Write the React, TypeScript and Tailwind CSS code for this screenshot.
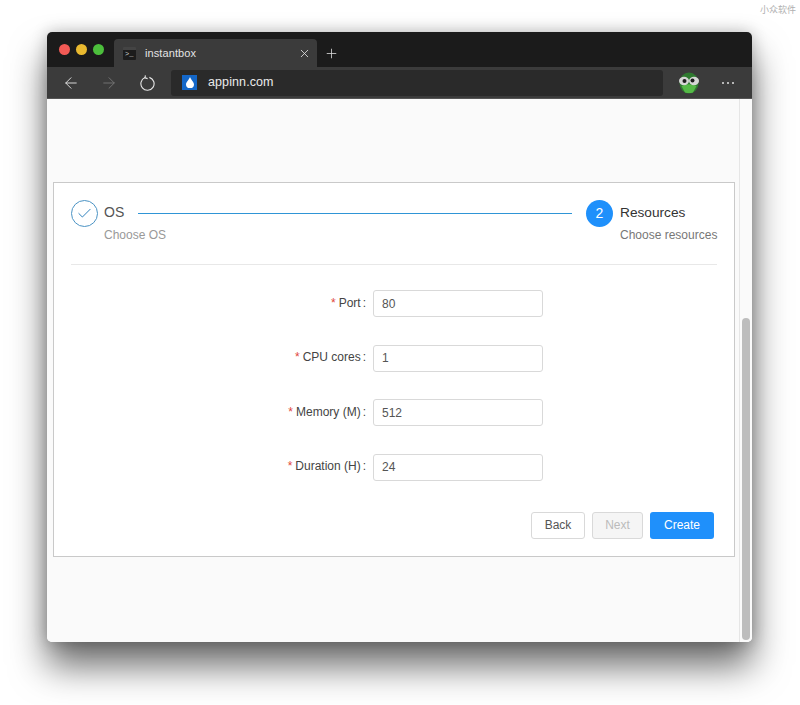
import React from 'react'
import { ArrowLeft, ArrowRight, Plus, X, Check } from 'lucide-react'

const fields = [
  { label: 'Port', value: '80' },
  { label: 'CPU cores', value: '1' },
  { label: 'Memory (M)', value: '512' },
  { label: 'Duration (H)', value: '24' },
]

function Frog() {
  return (
    <svg width="22" height="22" viewBox="0 0 22 22">
      <ellipse cx="11" cy="11" rx="9.5" ry="10.5" fill="#2f7a30" />
      <path d="M3.5 14 Q11 10.5 18.5 14 L15 20.5 Q11 21.5 7 20.5Z" fill="#55b947" />
      <ellipse cx="6" cy="9" rx="5" ry="4.2" fill="#d6d6d6" />
      <ellipse cx="16" cy="9" rx="5" ry="4.2" fill="#d6d6d6" />
      <circle cx="6.5" cy="9" r="2" fill="#1d1d1d" />
      <circle cx="14.5" cy="8.5" r="2" fill="#1d1d1d" />
    </svg>
  )
}

function Reload() {
  return (
    <svg width="16" height="16" viewBox="0 0 16 16" fill="none" stroke="#e8e8e8" strokeWidth="1.1">
      <path d="M6 2.6 A6.6 6.6 0 1 0 10.4 2.4" />
      <path d="M6.4 0.4 L6 2.8 L8.6 3.6" />
    </svg>
  )
}

function App() {
  return (
    <div className="relative w-[800px] h-[705px] bg-white pt-[32px] pl-[47px] overflow-hidden font-['Liberation_Sans',sans-serif]">
      {/* watermark */}
      <div className="absolute top-[3px] right-[4px] text-[9px] text-[#b0b0b0] font-['Noto_Sans_CJK_SC',sans-serif]">小众软件</div>

      {/* window */}
      <div className="w-[705px] h-[610px] rounded-[5px] overflow-hidden flex flex-col shadow-[0_24px_36px_rgba(0,0,0,0.58),0_0_16px_rgba(0,0,0,0.24)]">
        {/* tab strip */}
        <div className="h-[35px] shrink-0 bg-[#1b1b1b] flex items-end">
          <div className="flex items-center gap-[6px] pl-[12px] w-[67px] h-[35px] pb-[1px]">
            <span className="w-[11px] h-[11px] rounded-full bg-[#f25a55] shrink-0" />
            <span className="w-[11px] h-[11px] rounded-full bg-[#e9b92f] shrink-0" />
            <span className="w-[11px] h-[11px] rounded-full bg-[#4cbf3c] shrink-0" />
          </div>
          <div className="w-[203px] h-[28px] bg-[#3b3b3b] rounded-t-[4px] flex items-center pl-[9px] pr-[6px]">
            <div className="w-[13px] h-[13px] bg-[#1c1c1c] rounded-[1px] border-t-[3px] border-[#444] flex items-center pl-[2px]">
              <span className="text-[7px] leading-none text-[#cfcfcf] font-['Liberation_Mono',monospace]">&gt;_</span>
            </div>
            <span className="ml-[9px] text-[11px] text-[#e4e4e4] tracking-[0.1px]">instantbox</span>
            <X className="ml-auto text-[#e6e6e6]" size={13} strokeWidth={1.5} />
          </div>
          <div className="h-[28px] ml-[7px] flex items-center">
            <Plus className="text-[#d8d8d8]" size={15} strokeWidth={1.3} />
          </div>
        </div>

        {/* toolbar */}
        <div className="h-[32px] shrink-0 bg-[#3b3b3b] flex items-center pl-[15px] border-b border-[#555]">
          <ArrowLeft className="text-[#e8e8e8]" size={18} strokeWidth={1.2} />
          <ArrowRight className="ml-[20px] text-[#777]" size={18} strokeWidth={1.2} />
          <div className="ml-[21px]">
            <Reload />
          </div>
          <div className="ml-[16px] w-[492px] h-[26px] bg-[#2a2a2a] rounded-[3px] flex items-center pl-[11px]">
            <div className="w-[15px] h-[15px] bg-[#1467c8] flex items-center justify-center">
              <svg width="8" height="11" viewBox="0 0 8 11">
                <path d="M4 0 C5 3 8 5 8 7.4 A4 3.6 0 0 1 0 7.4 C0 5 3 3 4 0Z" fill="#fff" />
              </svg>
            </div>
            <span className="ml-[11px] text-[12.5px] text-[#eaeaea] tracking-[0.1px]">appinn.com</span>
          </div>
          <div className="ml-[15px] w-[24px] flex items-center">
            <Frog />
          </div>
          <div className="ml-[20px] flex gap-[3px]">
            <span className="w-[2px] h-[2px] bg-[#e0e0e0] rounded-full" />
            <span className="w-[2px] h-[2px] bg-[#e0e0e0] rounded-full" />
            <span className="w-[2px] h-[2px] bg-[#e0e0e0] rounded-full" />
          </div>
        </div>

        {/* page */}
        <div className="flex-1 flex bg-[#fafafa] min-h-0">
          <div className="flex-1 pt-[83px] pl-[6px]">
            {/* card */}
            <div className="w-[682px] h-[375px] bg-white border border-[#c9c9c9] px-[17px] pt-[17px]">
              {/* steps */}
              <div className="flex items-start h-[65px] border-b border-[#e8e8e8]">
                <div className="w-[27px] h-[27px] rounded-full border border-[#4b93c4] flex items-center justify-center shrink-0">
                  <Check className="text-[#2f82bd]" size={17} strokeWidth={1.4} />
                </div>
                <div className="ml-[6px] w-[62px] shrink-0">
                  <div className="text-[14px] leading-[25px] text-[#555]">OS</div>
                  <div className="mt-[2px] text-[12px] leading-[16px] text-[#999] whitespace-nowrap">Choose OS</div>
                </div>
                <div className="mt-[13px] ml-[-28px] w-[434px] h-px bg-[#2f95d6] shrink-0" />
                <div className="ml-[14px] w-[27px] h-[27px] rounded-full bg-[#1f90fb] text-white text-[14px] flex items-center justify-center shrink-0">2</div>
                <div className="ml-[7px]">
                  <div className="text-[13.7px] leading-[25px] text-[#333]">Resources</div>
                  <div className="mt-[2px] text-[12px] leading-[16px] text-[#777] whitespace-nowrap">Choose resources</div>
                </div>
              </div>

              {/* form */}
              <div className="mt-[25px] flex flex-col gap-[27.6px]">
                {fields.map((f) => (
                  <div key={f.label} className="flex items-center h-[27px]">
                    <label className="w-[302px] text-right text-[12px] text-[#444] pr-[7px] pb-[2px]">
                      <span className="text-[#e0473c] mr-[3px]">*</span>
                      {f.label}
                      <span className="ml-[2px]">:</span>
                    </label>
                    <div className="w-[170px] h-[27px] bg-white border border-[#d9d9d9] rounded-[3px] flex items-center pl-[8px] text-[12px] text-[#555]">
                      {f.value}
                    </div>
                  </div>
                ))}
              </div>

              {/* actions */}
              <div className="mt-[31px] flex justify-end gap-[7px] pr-[3px]">
                <button className="w-[54px] h-[27px] bg-white border border-[#d9d9d9] rounded-[3px] text-[12px] text-[#555]">Back</button>
                <button className="w-[51px] h-[27px] bg-[#f5f5f5] border border-[#d9d9d9] rounded-[3px] text-[12px] text-[#bbb]">Next</button>
                <button className="w-[64px] h-[27px] bg-[#1f90fb] rounded-[3px] text-[12px] text-white">Create</button>
              </div>
            </div>
          </div>

          {/* scrollbar */}
          <div className="w-[13px] bg-[#fafafa] border-l border-[#e6e6e6] flex flex-col justify-end items-center pb-[2px]">
            <div className="w-[8px] h-[322px] rounded-full bg-[#bdbdbd]" />
          </div>
        </div>
      </div>
    </div>
  )
}

export default App
